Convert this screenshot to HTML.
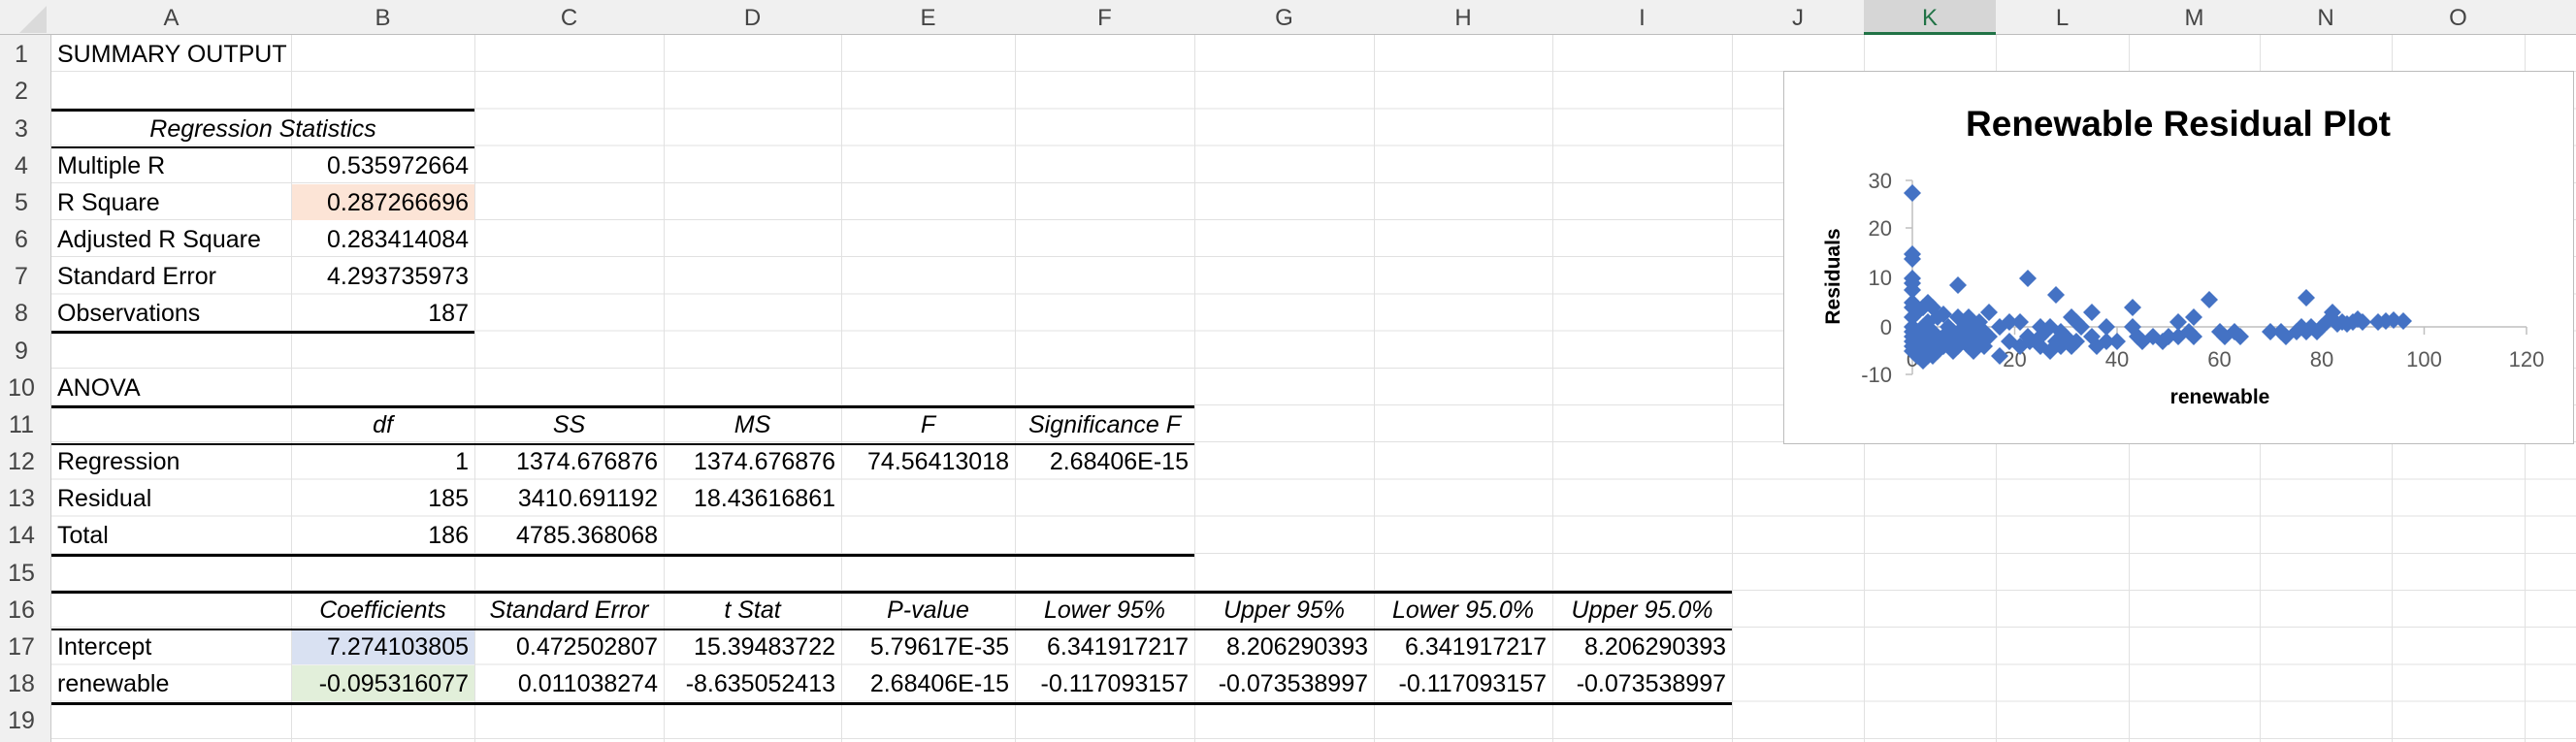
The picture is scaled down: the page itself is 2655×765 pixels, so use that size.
<!DOCTYPE html>
<html><head><meta charset="utf-8"><style>
body{margin:0;width:2655px;height:765px;overflow:hidden;background:#fff;font-family:"Liberation Sans",sans-serif;position:relative}
.a{position:absolute}
.c{position:absolute;height:38px;line-height:40px;font-size:25px;color:#000;white-space:nowrap;padding:0 6px;box-sizing:border-box}
.r{text-align:right}.m{text-align:center}.i{font-style:italic}
.vl{position:absolute;top:36px;width:1px;height:729px;background:#e1e1e1}
.h{position:absolute;top:0;height:36px;line-height:38px;font-size:24px;color:#444;text-align:center}
.rn{position:absolute;left:0;width:44px;text-align:center;font-size:25px;color:#444;height:38px;line-height:40px}
.bk{position:absolute;background:#000}
</style></head><body>
<div class="a" style="left:0;top:36px;width:2655px;height:729px;background:repeating-linear-gradient(to bottom,transparent 0,transparent 37.2px,#e1e1e1 37.2px,#e1e1e1 38.2px)"></div>
<div class="a" style="left:0;top:0;width:2655px;height:36px;background:#f0f0f0;border-bottom:1px solid #bdbdbd;box-sizing:border-box"></div>
<div class="a" style="left:0;top:36px;width:53px;height:729px;background:#f0f0f0;border-right:1px solid #c8c8c8;box-sizing:border-box"></div>
<div class="a" style="left:20px;top:6px;width:0;height:0;border-left:28px solid transparent;border-bottom:28px solid #dadada"></div>
<div class="a" style="left:1921px;top:0;width:136px;height:36px;background:#d6d6d6;border-bottom:3px solid #217346;box-sizing:border-box"></div>
<div class="vl" style="left:300px"></div><div class="vl" style="left:489px"></div><div class="vl" style="left:684px"></div><div class="vl" style="left:867px"></div><div class="vl" style="left:1046px"></div><div class="vl" style="left:1231px"></div><div class="vl" style="left:1416px"></div><div class="vl" style="left:1600px"></div><div class="vl" style="left:1785px"></div><div class="vl" style="left:1921px"></div><div class="vl" style="left:2057px"></div><div class="vl" style="left:2194px"></div><div class="vl" style="left:2329px"></div><div class="vl" style="left:2465px"></div><div class="vl" style="left:2602px"></div>
<div class="h" style="left:53px;width:247px">A</div><div class="h" style="left:300px;width:189px">B</div><div class="h" style="left:489px;width:195px">C</div><div class="h" style="left:684px;width:183px">D</div><div class="h" style="left:867px;width:179px">E</div><div class="h" style="left:1046px;width:185px">F</div><div class="h" style="left:1231px;width:185px">G</div><div class="h" style="left:1416px;width:184px">H</div><div class="h" style="left:1600px;width:185px">I</div><div class="h" style="left:1785px;width:136px">J</div><div class="h" style="left:1921px;width:136px;color:#217346">K</div><div class="h" style="left:2057px;width:137px">L</div><div class="h" style="left:2194px;width:135px">M</div><div class="h" style="left:2329px;width:136px">N</div><div class="h" style="left:2465px;width:137px">O</div>
<div class="rn" style="top:36px">1</div><div class="rn" style="top:74px">2</div><div class="rn" style="top:113px">3</div><div class="rn" style="top:151px">4</div><div class="rn" style="top:189px">5</div><div class="rn" style="top:227px">6</div><div class="rn" style="top:265px">7</div><div class="rn" style="top:303px">8</div><div class="rn" style="top:342px">9</div><div class="rn" style="top:380px">10</div><div class="rn" style="top:418px">11</div><div class="rn" style="top:456px">12</div><div class="rn" style="top:494px">13</div><div class="rn" style="top:532px">14</div><div class="rn" style="top:571px">15</div><div class="rn" style="top:609px">16</div><div class="rn" style="top:647px">17</div><div class="rn" style="top:685px">18</div><div class="rn" style="top:723px">19</div>
<div class="a" style="left:301px;top:190px;width:188px;height:37px;background:#fce4d6"></div>
<div class="a" style="left:301px;top:648px;width:188px;height:37px;background:#d9e1f2"></div>
<div class="a" style="left:301px;top:686px;width:188px;height:37px;background:#e2efda"></div>
<div class="bk" style="left:53px;top:112px;width:436px;height:3px"></div>
<div class="bk" style="left:53px;top:151px;width:436px;height:2px"></div>
<div class="bk" style="left:53px;top:341px;width:436px;height:3px"></div>
<div class="bk" style="left:53px;top:418px;width:1178px;height:3px"></div>
<div class="bk" style="left:53px;top:457px;width:1178px;height:2px"></div>
<div class="bk" style="left:53px;top:571px;width:1178px;height:3px"></div>
<div class="bk" style="left:53px;top:609px;width:1732px;height:3px"></div>
<div class="bk" style="left:53px;top:648px;width:1732px;height:2px"></div>
<div class="bk" style="left:53px;top:724px;width:1732px;height:3px"></div>
<div class="c" style="left:53px;top:36px">SUMMARY OUTPUT</div>
<div class="c m i" style="left:53px;top:113px;width:436px">Regression Statistics</div>
<div class="c" style="left:53px;top:151px">Multiple R</div><div class="c r" style="left:300px;top:151px;width:189px">0.535972664</div>
<div class="c" style="left:53px;top:189px">R Square</div><div class="c r" style="left:300px;top:189px;width:189px">0.287266696</div>
<div class="c" style="left:53px;top:227px">Adjusted R Square</div><div class="c r" style="left:300px;top:227px;width:189px">0.283414084</div>
<div class="c" style="left:53px;top:265px">Standard Error</div><div class="c r" style="left:300px;top:265px;width:189px">4.293735973</div>
<div class="c" style="left:53px;top:303px">Observations</div><div class="c r" style="left:300px;top:303px;width:189px">187</div>
<div class="c" style="left:53px;top:380px">ANOVA</div>
<div class="c m i" style="left:300px;top:418px;width:189px">df</div><div class="c m i" style="left:489px;top:418px;width:195px">SS</div><div class="c m i" style="left:684px;top:418px;width:183px">MS</div><div class="c m i" style="left:867px;top:418px;width:179px">F</div><div class="c m i" style="left:1046px;top:418px;width:185px">Significance F</div>
<div class="c" style="left:53px;top:456px">Regression</div><div class="c r" style="left:300px;top:456px;width:189px">1</div><div class="c r" style="left:489px;top:456px;width:195px">1374.676876</div><div class="c r" style="left:684px;top:456px;width:183px">1374.676876</div><div class="c r" style="left:867px;top:456px;width:179px">74.56413018</div><div class="c r" style="left:1046px;top:456px;width:185px">2.68406E-15</div>
<div class="c" style="left:53px;top:494px">Residual</div><div class="c r" style="left:300px;top:494px;width:189px">185</div><div class="c r" style="left:489px;top:494px;width:195px">3410.691192</div><div class="c r" style="left:684px;top:494px;width:183px">18.43616861</div>
<div class="c" style="left:53px;top:532px">Total</div><div class="c r" style="left:300px;top:532px;width:189px">186</div><div class="c r" style="left:489px;top:532px;width:195px">4785.368068</div>
<div class="c m i" style="left:300px;top:609px;width:189px">Coefficients</div><div class="c m i" style="left:489px;top:609px;width:195px">Standard Error</div><div class="c m i" style="left:684px;top:609px;width:183px">t Stat</div><div class="c m i" style="left:867px;top:609px;width:179px">P-value</div><div class="c m i" style="left:1046px;top:609px;width:185px">Lower 95%</div><div class="c m i" style="left:1231px;top:609px;width:185px">Upper 95%</div><div class="c m i" style="left:1416px;top:609px;width:184px">Lower 95.0%</div><div class="c m i" style="left:1600px;top:609px;width:185px">Upper 95.0%</div>
<div class="c" style="left:53px;top:647px">Intercept</div><div class="c r" style="left:300px;top:647px;width:189px">7.274103805</div><div class="c r" style="left:489px;top:647px;width:195px">0.472502807</div><div class="c r" style="left:684px;top:647px;width:183px">15.39483722</div><div class="c r" style="left:867px;top:647px;width:179px">5.79617E-35</div><div class="c r" style="left:1046px;top:647px;width:185px">6.341917217</div><div class="c r" style="left:1231px;top:647px;width:185px">8.206290393</div><div class="c r" style="left:1416px;top:647px;width:184px">6.341917217</div><div class="c r" style="left:1600px;top:647px;width:185px">8.206290393</div>
<div class="c" style="left:53px;top:685px">renewable</div><div class="c r" style="left:300px;top:685px;width:189px">-0.095316077</div><div class="c r" style="left:489px;top:685px;width:195px">0.011038274</div><div class="c r" style="left:684px;top:685px;width:183px">-8.635052413</div><div class="c r" style="left:867px;top:685px;width:179px">2.68406E-15</div><div class="c r" style="left:1046px;top:685px;width:185px">-0.117093157</div><div class="c r" style="left:1231px;top:685px;width:185px">-0.073538997</div><div class="c r" style="left:1416px;top:685px;width:184px">-0.117093157</div><div class="c r" style="left:1600px;top:685px;width:185px">-0.073538997</div>
<svg class="a" style="left:0;top:0" width="2655" height="765" xmlns="http://www.w3.org/2000/svg">
<rect x="1838.5" y="73.5" width="814" height="384" fill="#fff" stroke="#bcbcbc"/>
<text x="2245" y="140" font-family="Liberation Sans,sans-serif" font-weight="bold" font-size="37" text-anchor="middle">Renewable Residual Plot</text>
<g stroke="#bfbfbf" stroke-width="1.5">
<line x1="1971" y1="186" x2="1971" y2="386"/>
<line x1="1964" y1="186" x2="1971" y2="186"/><line x1="1964" y1="235" x2="1971" y2="235"/><line x1="1964" y1="286" x2="1971" y2="286"/><line x1="1964" y1="337" x2="1971" y2="337"/><line x1="1964" y1="386" x2="1971" y2="386"/>
<line x1="1971" y1="337" x2="2604" y2="337"/>
<line x1="1971" y1="337" x2="1971" y2="345"/><line x1="2076.5" y1="337" x2="2076.5" y2="345"/><line x1="2182" y1="337" x2="2182" y2="345"/><line x1="2287.5" y1="337" x2="2287.5" y2="345"/><line x1="2393" y1="337" x2="2393" y2="345"/><line x1="2498.5" y1="337" x2="2498.5" y2="345"/><line x1="2604" y1="337" x2="2604" y2="345"/>
</g>
<g font-family="Liberation Sans,sans-serif" font-size="22" fill="#595959" text-anchor="end">
<text x="1950" y="194">30</text><text x="1950" y="243">20</text><text x="1950" y="294">10</text><text x="1950" y="345">0</text><text x="1950" y="394">-10</text>
</g>
<g font-family="Liberation Sans,sans-serif" font-size="22" fill="#595959" text-anchor="middle">
<text x="1971" y="378">0</text><text x="2076.5" y="378">20</text><text x="2182" y="378">40</text><text x="2287.5" y="378">60</text><text x="2393" y="378">80</text><text x="2498.5" y="378">100</text><text x="2604" y="378">120</text>
</g>
<text x="2288" y="416" font-family="Liberation Sans,sans-serif" font-weight="bold" font-size="21" text-anchor="middle">renewable</text>
<text transform="translate(1896,285) rotate(-90)" font-family="Liberation Sans,sans-serif" font-weight="bold" font-size="21" text-anchor="middle">Residuals</text>
<defs><path id="m" d="M0,-9L9,0L0,9L-9,0Z" fill="#4472c4"/></defs>
<g transform="translate(1971,337)">
<use href="#m" x="0" y="-138"/><use href="#m" x="0" y="-75"/><use href="#m" x="0" y="-70"/><use href="#m" x="0" y="-50"/><use href="#m" x="0" y="-45"/><use href="#m" x="0" y="-38"/><use href="#m" x="0" y="-25"/><use href="#m" x="0" y="-20"/><use href="#m" x="0" y="-10"/><use href="#m" x="0" y="0"/><use href="#m" x="0" y="5"/><use href="#m" x="0" y="10"/><use href="#m" x="0" y="15"/><use href="#m" x="0" y="20"/><use href="#m" x="0" y="25"/>
<use href="#m" x="5" y="-15"/><use href="#m" x="5" y="5"/><use href="#m" x="5" y="20"/><use href="#m" x="5" y="30"/>
<use href="#m" x="11" y="-20"/><use href="#m" x="11" y="0"/><use href="#m" x="11" y="15"/><use href="#m" x="11" y="35"/><use href="#m" x="11" y="25"/>
<use href="#m" x="16" y="-25"/><use href="#m" x="16" y="-5"/><use href="#m" x="16" y="10"/><use href="#m" x="16" y="30"/>
<use href="#m" x="21" y="-20"/><use href="#m" x="21" y="5"/><use href="#m" x="21" y="20"/><use href="#m" x="21" y="30"/>
<use href="#m" x="26" y="-10"/><use href="#m" x="26" y="15"/><use href="#m" x="26" y="25"/>
<use href="#m" x="32" y="-13"/><use href="#m" x="32" y="10"/><use href="#m" x="32" y="20"/>
<use href="#m" x="37" y="0"/><use href="#m" x="37" y="15"/>
<use href="#m" x="42" y="5"/><use href="#m" x="42" y="25"/>
<use href="#m" x="47" y="-43"/><use href="#m" x="47" y="-10"/><use href="#m" x="47" y="10"/><use href="#m" x="47" y="20"/>
<use href="#m" x="53" y="-5"/><use href="#m" x="53" y="15"/><use href="#m" x="53" y="0"/>
<use href="#m" x="58" y="5"/><use href="#m" x="58" y="20"/><use href="#m" x="58" y="-10"/>
<use href="#m" x="63" y="0"/><use href="#m" x="63" y="15"/><use href="#m" x="63" y="25"/>
<use href="#m" x="69" y="-5"/><use href="#m" x="69" y="10"/>
<use href="#m" x="74" y="5"/><use href="#m" x="74" y="20"/>
<use href="#m" x="79" y="-15"/><use href="#m" x="79" y="10"/>
<use href="#m" x="90" y="0"/><use href="#m" x="90" y="30"/>
<use href="#m" x="100" y="-5"/><use href="#m" x="100" y="15"/>
<use href="#m" x="111" y="-5"/><use href="#m" x="111" y="20"/>
<use href="#m" x="119" y="-50"/><use href="#m" x="119" y="10"/><use href="#m" x="121" y="15"/>
<use href="#m" x="132" y="0"/><use href="#m" x="132" y="20"/><use href="#m" x="132" y="10"/><use href="#m" x="137" y="5"/>
<use href="#m" x="142" y="25"/><use href="#m" x="142" y="0"/>
<use href="#m" x="148" y="-33"/><use href="#m" x="148" y="15"/>
<use href="#m" x="153" y="5"/><use href="#m" x="153" y="20"/><use href="#m" x="158" y="10"/>
<use href="#m" x="164" y="-10"/><use href="#m" x="164" y="20"/>
<use href="#m" x="169" y="15"/><use href="#m" x="169" y="-5"/><use href="#m" x="174" y="0"/>
<use href="#m" x="185" y="-15"/><use href="#m" x="185" y="10"/><use href="#m" x="190" y="20"/>
<use href="#m" x="200" y="0"/><use href="#m" x="200" y="15"/><use href="#m" x="211" y="15"/>
<use href="#m" x="227" y="-20"/><use href="#m" x="227" y="0"/><use href="#m" x="232" y="10"/><use href="#m" x="237" y="15"/>
<use href="#m" x="248" y="10"/><use href="#m" x="258" y="15"/><use href="#m" x="264" y="10"/>
<use href="#m" x="274" y="-5"/><use href="#m" x="274" y="10"/><use href="#m" x="285" y="5"/>
<use href="#m" x="290" y="-10"/><use href="#m" x="290" y="10"/>
<use href="#m" x="306" y="-28"/><use href="#m" x="317" y="5"/><use href="#m" x="322" y="10"/><use href="#m" x="332" y="5"/><use href="#m" x="338" y="10"/>
<use href="#m" x="369" y="5"/><use href="#m" x="380" y="5"/><use href="#m" x="385" y="10"/>
<use href="#m" x="396" y="5"/><use href="#m" x="401" y="0"/><use href="#m" x="406" y="-30"/><use href="#m" x="406" y="5"/><use href="#m" x="411" y="0"/><use href="#m" x="417" y="5"/><use href="#m" x="422" y="0"/>
<use href="#m" x="427" y="-5"/><use href="#m" x="433" y="-15"/><use href="#m" x="438" y="-3"/><use href="#m" x="443" y="-5"/><use href="#m" x="448" y="-3"/><use href="#m" x="454" y="-5"/><use href="#m" x="459" y="-8"/><use href="#m" x="464" y="-5"/>
<use href="#m" x="480" y="-5"/><use href="#m" x="488" y="-6"/><use href="#m" x="496" y="-7"/><use href="#m" x="506" y="-6"/>
</g>
</svg>
</body></html>
